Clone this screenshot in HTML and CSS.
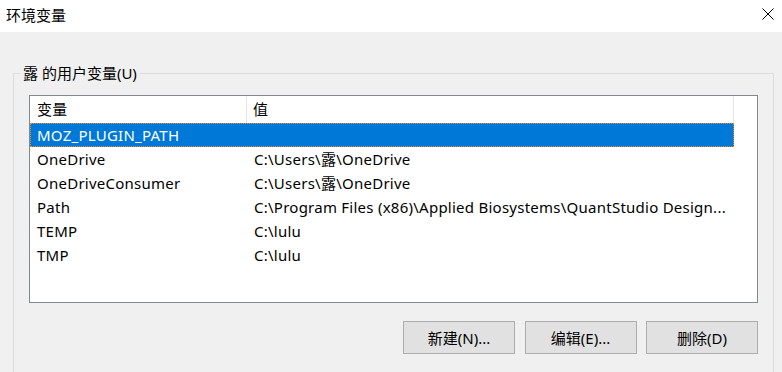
FILE: index.html
```html
<!DOCTYPE html>
<html lang="zh-CN">

<head>
    <meta charset="utf-8">
    <title>环境变量</title>

    <link rel="stylesheet" href="styles.css">
</head>

<body>
    <header class="titlebar">
        <p class="title">环境变量</p>
        <button class="close" aria-label="关闭">
            <svg width="12" height="12" viewBox="0 0 12 12">
                <path d="M0.5 0.5 L11.5 11.5 M11.5 0.5 L0.5 11.5" stroke="#000" stroke-width="1" fill="none" />
            </svg>
        </button>
    </header>
    <main>
        <fieldset class="group">
            <legend>露 的用户变量(U)</legend>
            <div class="group-body">
                <div class="listview">
                    <div class="row head">
                        <span class="col-name">变量</span>
                        <span class="col-value">值</span>
                    </div>
                    <div class="row selected">
                        <span class="col-name">MOZ_PLUGIN_PATH</span>
                        <span class="col-value"></span>
                    </div>
                    <div class="row">
                        <span class="col-name">OneDrive</span>
                        <span class="col-value">C:\Users\露\OneDrive</span>
                    </div>
                    <div class="row">
                        <span class="col-name">OneDriveConsumer</span>
                        <span class="col-value">C:\Users\露\OneDrive</span>
                    </div>
                    <div class="row">
                        <span class="col-name">Path</span>
                        <span class="col-value">C:\Program Files (x86)\Applied Biosystems\QuantStudio Design...</span>
                    </div>
                    <div class="row">
                        <span class="col-name">TEMP</span>
                        <span class="col-value">C:\lulu</span>
                    </div>
                    <div class="row">
                        <span class="col-name">TMP</span>
                        <span class="col-value">C:\lulu</span>
                    </div>
                </div>
                <div class="actions">
                    <button class="btn">新建(N)...</button>
                    <button class="btn">编辑(E)...</button>
                    <button class="btn">删除(D)</button>
                </div>
            </div>
        </fieldset>
    </main>
</body>

</html>
```

FILE: styles.css
```css
* {
    padding: 0;
    margin: 0;
    box-sizing: border-box;
    font-family: "Noto Sans", "Noto Sans CJK SC", sans-serif;
}

body {
    background-color: #f0f0f0;
    font-size: 15px;
    color: #000;
    overflow: hidden;
}

.titlebar {
    height: 32px;
    background-color: #fff;
    display: flex;
    justify-content: space-between;
    align-items: flex-start;
}

.title {
    padding: 5px 0 0 6px;
    line-height: 20px;
}

.close {
    border: none;
    background: none;
    margin: 8px 8px 0 0;
    width: 12px;
    height: 12px;
    display: flex;
}

.group {
    margin: 31px 8px 0 13px;
    border: 1px solid #dcdcdc;
    padding: 0;
}

.group legend {
    margin-left: 6px;
    padding: 0 3px;
    line-height: 20px;
}

.group-body {
    padding: 12px 15px 40px 15px;
}

.listview {
    height: 208px;
    background-color: #fff;
    border: 1px solid #828790;
    letter-spacing: 0.25px;
}

.row {
    display: flex;
    width: 704px;
    height: 24px;
    line-height: 24px;
    white-space: nowrap;
}

.col-name {
    width: 217px;
    padding-left: 7px;
    overflow: hidden;
}

.col-value {
    flex: 1;
    padding-left: 7px;
    overflow: hidden;
}

.row.head {
    height: 27px;
    line-height: 27px;
}

.row.head .col-name,
.row.head .col-value {
    border-right: 1px solid #e5e5e5;
}

.row.head .col-value {
    padding-left: 6px;
}

.row.selected {
    background-color: #0078d7;
    color: #fff;
    outline: 1px dotted #f08a24;
    outline-offset: -1px;
}

.actions {
    display: flex;
    justify-content: flex-end;
    gap: 9.5px;
    margin-top: 18px;
}

.btn {
    width: 112px;
    height: 33px;
    background-color: #e1e1e1;
    border: 1px solid #adadad;
    font-size: 15px;
    color: #000;
}
```
